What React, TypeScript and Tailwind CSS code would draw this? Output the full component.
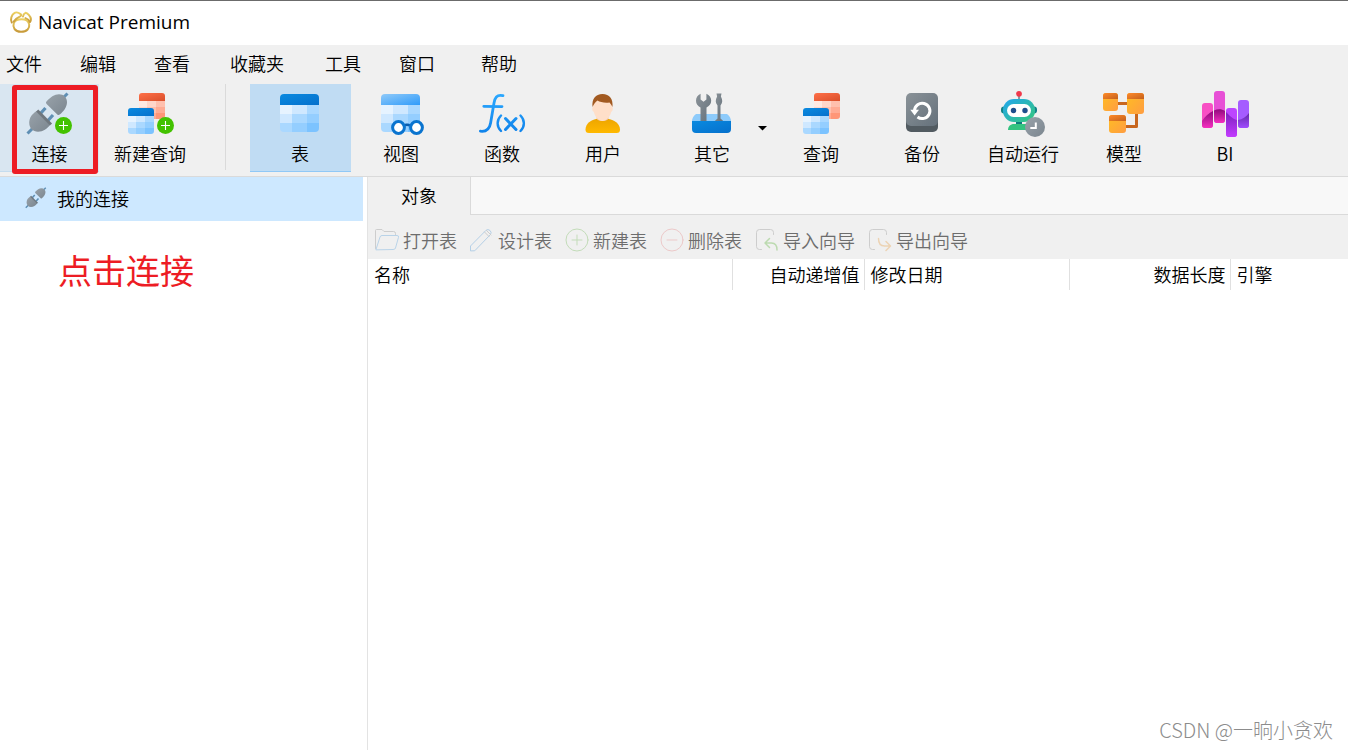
import clsx from 'clsx';
import { ReactNode } from 'react';

interface IToolButton {
  label: string;
  icon: ReactNode;
  selected?: boolean;
}

const MENUS = [
  { label: '文件', width: 'w-[74px]' },
  { label: '编辑', width: 'w-[74px]' },
  { label: '查看', width: 'w-[76px]' },
  { label: '收藏夹', width: 'w-[95px]' },
  { label: '工具', width: 'w-[74px]' },
  { label: '窗口', width: 'w-[82px]' },
  { label: '帮助', width: 'w-[74px]' },
];

const COLUMNS = [
  { label: '名称', className: 'w-[364px] border-r text-left' },
  { label: '自动递增值', className: 'w-[132px] border-r text-right' },
  { label: '修改日期', className: 'w-[205px] border-r text-left' },
  { label: '数据长度', className: 'w-[161px] border-r text-right' },
  { label: '引擎', className: 'text-left' },
];

const BLUES = ['#e6f3ff', '#cfe8ff', '#aad8ff', '#94ceff', '#7cc3ff'];
const ORANGES = ['#ffe9e2', '#ffd6ca', '#ffc0ae', '#ffab94', '#ff9678'];

const Gradients = () => (
  <svg className="absolute h-0 w-0" aria-hidden="true">
    <defs>
      <linearGradient id="gold" x1="0" y1="0" x2="0" y2="1">
        <stop offset="0" stopColor="#ecd062" />
        <stop offset="1" stopColor="#c79a3a" />
      </linearGradient>
      <linearGradient id="blue" x1="0" y1="0" x2="1" y2="1">
        <stop offset="0" stopColor="#0a8ae0" />
        <stop offset="1" stopColor="#0570cc" />
      </linearGradient>
      <linearGradient id="sky" x1="0" y1="0" x2="1" y2="1">
        <stop offset="0" stopColor="#90caf9" />
        <stop offset="1" stopColor="#2f9bfa" />
      </linearGradient>
      <linearGradient id="orange" x1="0" y1="0" x2="1" y2="1">
        <stop offset="0" stopColor="#ff7048" />
        <stop offset="1" stopColor="#d94f2b" />
      </linearGradient>
      <linearGradient id="steel" x1="0" y1="0" x2="1" y2="1">
        <stop offset="0" stopColor="#99a2aa" />
        <stop offset="1" stopColor="#7b868f" />
      </linearGradient>
      <linearGradient id="slate" x1="0" y1="0" x2="1" y2="1">
        <stop offset="0" stopColor="#8a9298" />
        <stop offset="1" stopColor="#65717b" />
      </linearGradient>
      <linearGradient id="fx" gradientUnits="userSpaceOnUse" x1="0" y1="4" x2="0" y2="44">
        <stop offset="0" stopColor="#2ba8ff" />
        <stop offset="1" stopColor="#0f82ea" />
      </linearGradient>
      <linearGradient id="shirt" x1="0" y1="0" x2="0" y2="1">
        <stop offset="0" stopColor="#eda500" />
        <stop offset="1" stopColor="#ffb900" />
      </linearGradient>
      <linearGradient id="robot" x1="0" y1="0" x2="1" y2="1">
        <stop offset="0" stopColor="#22a6f0" />
        <stop offset="1" stopColor="#35c878" />
      </linearGradient>
      <linearGradient id="amber" x1="0" y1="0" x2="1" y2="1">
        <stop offset="0" stopColor="#ffbd22" />
        <stop offset="1" stopColor="#ff9d42" />
      </linearGradient>
      <linearGradient id="rust" x1="0" y1="0" x2="1" y2="1">
        <stop offset="0" stopColor="#ff8a2a" />
        <stop offset="1" stopColor="#c4601c" />
      </linearGradient>
      <linearGradient id="magenta" x1="0" y1="0" x2="0" y2="1">
        <stop offset="0" stopColor="#8f0a7c" />
        <stop offset="1" stopColor="#f52fc0" />
      </linearGradient>
      <linearGradient id="violet" x1="0" y1="0" x2="0" y2="1">
        <stop offset="0" stopColor="#7c22bd" />
        <stop offset="1" stopColor="#c33bff" />
      </linearGradient>
      <linearGradient id="indigo" x1="0" y1="0" x2="0" y2="1">
        <stop offset="0" stopColor="#6428a8" />
        <stop offset="1" stopColor="#a04dff" />
      </linearGradient>
    </defs>
  </svg>
);

const Icon = ({
  children,
  className = 'h-12 w-12',
}: {
  children: ReactNode;
  className?: string;
}) => (
  <svg viewBox="0 0 48 48" fill="none" className={className} aria-hidden="true">
    {children}
  </svg>
);

const LogoIcon = () => (
  <svg
    viewBox="0 0 24 24"
    fill="none"
    stroke="url(#gold)"
    strokeWidth="2"
    strokeLinecap="round"
    strokeLinejoin="round"
    className="h-6 w-6"
    aria-hidden="true"
  >
    <path d="M4.800 13C3.500 17 5.500 21.600 12 21.800c6.200 0 8.800-3.800 8.200-7.400C19.600 11 16 9.300 12.500 9.300c-4 0-6.700 1.400-7.700 3.700Z" />
    <path d="M2.800 12.500C1 9.500 2.500 4.500 5.600 2.800c1.600-.8 4.600 0 6.200 1.400.8.800.3 1.700-.7 2.200C8.500 7.600 6.200 9 4.800 11.500" />
    <path d="M14 6.500c.2-1.700 1-3 2.500-3.700 2 .3 5 3.300 5.400 6.200.1 1.400-.4 2.300-1 3-.8-1.800-2.500-3.200-4.400-3.900" />
  </svg>
);

const AddBadge = ({ x }: { x: number }) => (
  <g>
    <circle cx={x} cy="35.5" r="8.5" fill="#43c200" />
    <path d={`M${x - 4.5} 35.5h9M${x} 31v9`} stroke="#fff" strokeWidth="1.1" />
  </g>
);

const Plug = () => (
  <g>
    <path d="M37.5 7.5 41.5 3.5M1.5 43.5l5-5" stroke="#5f8fb4" strokeWidth="3" />
    <path d="m14.500 23.500 5-5.500M22 30.500l5-5.500" stroke="#5f8fb4" strokeWidth="3.2" />
    <path
      d="M20.500 11.600C24 7.500 28.500 4.300 33 4.300c4.800 0 8 3.400 8 7.900 0 5-3.600 9.300-7.300 12.400-.8.700-1.700.6-2.400-.1L20.600 14c-.7-.7-.8-1.600-.1-2.400Z"
      fill="url(#steel)"
    />
    <path
      d="M10.500 21C6 24 3.200 27.600 3.200 32.800c0 5.200 3.600 9 8.800 9 5.200 0 9-2.900 12.200-7L10.500 21Z"
      fill="url(#steel)"
    />
    <path d="m11.200 20.500 13.800 14" stroke="#6f777e" strokeWidth="3" />
  </g>
);

const Sheet = ({ warm = false }: { warm?: boolean }) => {
  const shades = warm ? ORANGES : BLUES;

  return (
    <g>
      <path d="M0 8V3a3 3 0 0 1 3-3h20a3 3 0 0 1 3 3v5Z" fill={warm ? 'url(#orange)' : 'url(#blue)'} />
      <path d="M0 8h8v6H0Z" fill={shades[0]} />
      <path d="M8 8h9v6H8ZM0 14h8v6H0Z" fill={shades[1]} />
      <path d="M17 8h9v6h-9ZM8 14h9v6H8ZM0 20h8v6H3a3 3 0 0 1-3-3Z" fill={shades[2]} />
      <path d="M17 14h9v6h-9ZM8 20h9v6H8Z" fill={shades[3]} />
      <path d="M17 20h9v3a3 3 0 0 1-3 3h-6Z" fill={shades[4]} />
    </g>
  );
};

const Sheets = () => (
  <g>
    <g transform="translate(13 3)">
      <Sheet warm />
    </g>
    <g transform="translate(2 18)">
      <Sheet />
    </g>
  </g>
);

const Grid = ({ header }: { header: string }) => (
  <g>
    <path d="M4 15V8a4 4 0 0 1 4-4h31a4 4 0 0 1 4 4v7Z" fill={header} />
    <path d="M4 15h12v9H4Z" fill={BLUES[0]} />
    <path d="M16 15h15v9H16ZM4 24h12v9H4Z" fill={BLUES[1]} />
    <path d="M31 15h12v9H31ZM16 24h15v9H16ZM4 33h12v9H8a4 4 0 0 1-4-4Z" fill={BLUES[2]} />
    <path d="M31 24h12v9H31ZM16 33h15v9H16Z" fill={BLUES[3]} />
    <path d="M31 33h12v5a4 4 0 0 1-4 4h-8Z" fill={BLUES[4]} />
  </g>
);

const ConnectionIcon = () => (
  <Icon>
    <Plug />
    <AddBadge x={37.5} />
  </Icon>
);

const NewQueryIcon = () => (
  <Icon>
    <Sheets />
    <AddBadge x={39.5} />
  </Icon>
);

const TableIcon = () => (
  <Icon>
    <Grid header="url(#blue)" />
  </Icon>
);

const ViewIcon = () => (
  <Icon>
    <Grid header="url(#sky)" />
    <path d="M27 35.5c2-1 4-1 6 0" stroke="#0b5cad" strokeWidth="2.5" />
    <circle cx="21.5" cy="37.5" r="5.9" fill="#fff" stroke="#0a74cf" strokeWidth="3" />
    <circle cx="39.5" cy="37.5" r="5.9" fill="#fff" stroke="#0a74cf" strokeWidth="3" />
  </Icon>
);

const FunctionIcon = () => (
  <Icon>
    <g stroke="url(#fx)" strokeLinecap="round" strokeWidth="2.8">
      <path d="M25 5.700C18.500 4.200 16.800 8 16 13l-3.400 20c-1 5.800-3.600 9-10.200 8.200" />
      <path d="M5.800 16.300 24 16.600" />
      <path d="m27.500 28.500 10.500 11M38 28.500l-10.500 11" strokeWidth="3" />
      <path
        d="M23 25.500c-4.500 4.500-4.500 11 0 15.500M42.500 25.500c4.500 4.500 4.500 11 0 15.500"
        strokeWidth="2.4"
      />
    </g>
  </Icon>
);

const UserIcon = () => (
  <Icon>
    <path
      d="M6.500 39.500c0-6 5.500-9.700 12-10.800h10c6.500 1.100 12.500 4.800 12.500 10.800 0 2.400-1 3.500-3.500 3.500H10c-2.500 0-3.500-1.100-3.500-3.500Z"
      fill="url(#shirt)"
    />
    <path d="M17.500 27h12v1.800c-2.300 3-9.700 3-12 0Z" fill="#f3c9ab" />
    <path
      d="M14 12c3-4 16-4 19 0v5c1.500.6.8 4.400-.8 4.800C31.300 26.500 27.500 31 23.500 31s-7.800-4.500-8.700-9.200c-1.600-.4-2.300-4.200-.8-4.800Z"
      fill="#ffdfc9"
    />
    <path
      d="M13.500 17c-.8-8 3-13 10-13s10.800 5 10 13c-.7-1.600-1.700-3-3-4.500-5 .8-9.300-.4-12-2-2.200 1.400-3.600 3.800-5 6.500Z"
      fill="#a25a21"
    />
  </Icon>
);

const OthersIcon = () => (
  <Icon>
    <path d="M8 24h31c2.500 2 4 4.500 4 7H4c0-2.500 1.500-5 4-7Z" fill="#8dcbfb" />
    <path
      d="M12.600 3.700v5.800l2.900 2.300 2.900-2.300V3.700c3 1.200 4.800 4 4.800 7.100 0 3.200-2 5.500-4.700 6.600V32h-6V17.400C9.800 16.300 8 14 8 10.800c0-3.100 1.700-5.900 4.600-7.100Z"
      fill="url(#slate)"
    />
    <path
      d="M28.500 3.500h5l-.6 3c1.800 3.500 1.900 6-.4 9V28.500l2.700 2.500h-8.400l2.700-2.500V15.500c-2.300-3-2.200-5.500-.4-9Z"
      fill="url(#slate)"
    />
    <path d="M4 31h39v8a4 4 0 0 1-4 4H8a4 4 0 0 1-4-4Z" fill="url(#blue)" />
  </Icon>
);

const QueryIcon = () => (
  <Icon>
    <g transform="translate(4 0)">
      <Sheets />
    </g>
  </Icon>
);

const BackupIcon = () => (
  <Icon>
    <rect x="8" y="8" width="32" height="34" rx="5" fill="#525b61" />
    <rect x="8" y="3" width="32" height="33" rx="5" fill="url(#slate)" />
    <path d="M16.500 20.500a7.700 7.700 0 1 1 3 6.500" stroke="#fff" strokeWidth="3" />
    <path d="M12.300 19.800h8.700L16.600 25.500Z" fill="#fff" />
  </Icon>
);

const AutomationIcon = () => (
  <Icon>
    <path d="M20 5v5" stroke="#8d979f" strokeWidth="2" />
    <circle cx="20" cy="3.8" r="2.9" fill="#f0384a" />
    <rect x="2" y="16.5" width="36" height="7" rx="3" fill="#118388" />
    <path d="M17 31h6v4h-6Z" fill="#0e7c7e" />
    <rect x="4" y="9" width="32" height="23" rx="11" fill="url(#robot)" />
    <rect x="8" y="14" width="24" height="13" rx="6.5" fill="#fff" />
    <circle cx="14.5" cy="20.5" r="2.7" fill="#1d4e8c" />
    <circle cx="26" cy="20.5" r="2.7" fill="#1d4e8c" />
    <path d="M9 40c0-3.800 2.500-6 6-6h11c3.500 0 5 2 5 6Z" fill="#33c380" />
    <circle cx="36" cy="37" r="10" fill="url(#steel)" />
    <path d="M36.800 32.500V38h-5.500" stroke="#fff" strokeWidth="2" />
  </Icon>
);

const ModelBox = ({
  x,
  y,
  width,
  height,
}: {
  x: number;
  y: number;
  width: number;
  height: number;
}) => (
  <g>
    <rect x={x} y={y} width={width} height={height} rx="3" fill="url(#amber)" />
    <path d={`M${x} ${y + 6}v-3a3 3 0 0 1 3-3h${width - 6}a3 3 0 0 1 3 3v3Z`} fill="url(#rust)" />
  </g>
);

const ModelIcon = () => (
  <Icon>
    <path d="M17 13.500h11M36.500 23v13.500H25" stroke="#c8671f" strokeWidth="3" strokeLinejoin="round" />
    <ModelBox x={3} y={3} width={15} height={18} />
    <ModelBox x={27} y={3} width={17} height={21} />
    <ModelBox x={9} y={25} width={17} height={18} />
  </Icon>
);

const BiIcon = () => (
  <Icon>
    <clipPath id="bi-bars">
      <rect x="1" y="13" width="11" height="25" rx="3" />
      <rect x="13" y="1" width="11" height="32" rx="3" />
      <rect x="25" y="18" width="11" height="29" rx="3" />
      <rect x="37" y="10" width="11" height="28" rx="3" />
    </clipPath>
    <g clipPath="url(#bi-bars)">
      <path d="M1 0h11v48H1Z" fill="#f84fc4" />
      <path d="M13 0h11v48H13Z" fill="#e750d6" />
      <path d="M25 0h11v48H25Z" fill="#bd45ff" />
      <path d="M37 0h11v48H37Z" fill="#a55cff" />
      <path d="M1 31c3-4.500 7-8 11-10v17H1Z" fill="url(#magenta)" />
      <path d="M13 20.500c4-2 8-1.500 11 .5v12H13Z" fill="url(#magenta)" />
      <path d="M25 22c3.500 3.500 6 6.800 11 8v17H25Z" fill="url(#violet)" />
      <path d="M37 30c4.500-.5 8-3 11-7v15H37Z" fill="url(#indigo)" />
    </g>
  </Icon>
);

const OBJECT_TOOLS: IToolButton[] = [
  { label: '表', icon: <TableIcon />, selected: true },
  { label: '视图', icon: <ViewIcon /> },
  { label: '函数', icon: <FunctionIcon /> },
  { label: '用户', icon: <UserIcon /> },
];

const MORE_TOOLS: IToolButton[] = [
  { label: '查询', icon: <QueryIcon /> },
  { label: '备份', icon: <BackupIcon /> },
  { label: '自动运行', icon: <AutomationIcon /> },
  { label: '模型', icon: <ModelIcon /> },
  { label: 'BI', icon: <BiIcon /> },
];

const ToolButton = ({
  label,
  icon,
  className,
}: {
  label: string;
  icon: ReactNode;
  className: string;
}) => (
  <button
    type="button"
    className={clsx(
      'flex h-[88px] shrink-0 flex-col items-center gap-[3px] border-b pt-[6px]',
      className,
    )}
  >
    {icon}
    <span className="leading-6 whitespace-nowrap">{label}</span>
  </button>
);

const SmallIcon = ({ children, stroke }: { children: ReactNode; stroke: string }) => (
  <svg
    viewBox="0 0 24 24"
    fill="none"
    stroke={stroke}
    strokeLinecap="round"
    strokeLinejoin="round"
    className="h-6 w-6"
    aria-hidden="true"
  >
    {children}
  </svg>
);

const ACTIONS = [
  {
    label: '打开表',
    icon: (
      <SmallIcon stroke="#b9d3e8">
        <path d="M.5 20.500V2.500q0-1 1-1H7l2 2h9.500q2 0 2 2v1" stroke="#cdcdcd" />
        <path d="M1 21.500 5 9q.5-1.500 2-1.500h15q2 0 1.500 1.800L20.500 20q-.4 1.500-2 1.500Z" />
      </SmallIcon>
    ),
  },
  {
    label: '设计表',
    icon: (
      <SmallIcon stroke="#b4cfe6">
        <path d="M.5 22.500V18L16 2.300q2-1.600 4 .2t.5 4L5 22.500Z" />
        <path d="m14.500 4 4.500 4.500M16.500 2.500 21 7" stroke="#cdcdcd" />
      </SmallIcon>
    ),
  },
  {
    label: '新建表',
    icon: (
      <SmallIcon stroke="#c3dcb9">
        <circle cx="12" cy="12" r="11" />
        <path d="M7 12h10M12 7v10" />
      </SmallIcon>
    ),
  },
  {
    label: '删除表',
    icon: (
      <SmallIcon stroke="#ecc9c9">
        <circle cx="12" cy="12" r="11" />
        <path d="M7 12h10" />
      </SmallIcon>
    ),
  },
  {
    label: '导入向导',
    icon: (
      <SmallIcon stroke="#bcdab0">
        <path d="M6.500 21.500h-2q-3 0-3-3v-14q0-3 3-3h11q3 0 3 3v2" stroke="#cdcdcd" />
        <path d="m14.500 10.500-4.500 4.500 4.500 4.500M10.500 15h6q5.500 0 5.500 7" strokeWidth="1.5" />
      </SmallIcon>
    ),
  },
  {
    label: '导出向导',
    icon: (
      <SmallIcon stroke="#ecd3b4">
        <path d="M6.500 21.500h-2q-3 0-3-3v-14q0-3 3-3h11q3 0 3 3v2" stroke="#cdcdcd" />
        <path d="M10.500 10.500q0 7.500 6 7.500h5M18 13.500l4.500 4.500-4.500 4.500" strokeWidth="1.5" />
      </SmallIcon>
    ),
  },
];

const App = () => {
  return (
    <div className="relative flex min-h-screen flex-col overflow-hidden bg-white font-['Noto_Sans_CJK_SC',sans-serif] text-[18px] font-[350] text-black">
      <Gradients />

      <header className="flex h-[45px] items-center gap-[5px] border-t border-[#6b6b6b] pb-[2px] pl-[9px]">
        <LogoIcon />
        <h1 className="font-['Open_Sans','Noto_Sans',sans-serif] text-[19px] font-normal">
          Navicat Premium
        </h1>
      </header>

      <nav className="flex h-[39px] items-center bg-[#f0f0f0] pb-[2px] pl-[6px]">
        {MENUS.map(menu => (
          <button key={menu.label} type="button" className={clsx('text-left', menu.width)}>
            {menu.label}
          </button>
        ))}
      </nav>

      <div className="flex items-start border-b border-[#dadada] bg-[#f0f0f0] pb-1">
        <div className="relative">
          <ToolButton
            label="连接"
            icon={<ConnectionIcon />}
            className="w-[99px] border-[#c5dcee] bg-[#d9e6f1]"
          />
          <div className="pointer-events-none absolute top-px right-px -bottom-[2px] left-[12px] rounded-[3px] border-[5px] border-[#ed1c24]" />
        </div>
        <ToolButton
          label="新建查询"
          icon={<NewQueryIcon />}
          className="w-[102px] border-transparent"
        />
        <div className="mr-6 ml-6 h-[86px] w-px shrink-0 bg-[#dadada]" />
        {OBJECT_TOOLS.map(tool => (
          <ToolButton
            key={tool.label}
            label={tool.label}
            icon={tool.icon}
            className={clsx(
              'w-[101px] pr-px',
              tool.selected ? 'border-[#90c8f6] bg-[#c0dcf3]' : 'border-transparent',
            )}
          />
        ))}
        <div className="flex shrink-0 pl-3">
          <ToolButton label="其它" icon={<OthersIcon />} className="w-[92px] border-transparent" />
          <button type="button" aria-label="更多" className="h-[88px] w-[13px]">
            <svg viewBox="0 0 9 5" className="h-[5px] w-[9px]" aria-hidden="true">
              <path d="M0 0h9L4.500 4.500Z" />
            </svg>
          </button>
        </div>
        {MORE_TOOLS.map(tool => (
          <ToolButton
            key={tool.label}
            label={tool.label}
            icon={tool.icon}
            className="w-[101px] border-transparent pr-px"
          />
        ))}
      </div>

      <div className="flex flex-1">
        <aside className="w-[368px] shrink-0 border-r border-[#e3e3e3]">
          <button
            type="button"
            className="mr-1 flex h-11 w-[363px] items-center gap-2 bg-[#cde8ff] pb-[2px] pl-[25px]"
          >
            <Icon className="h-6 w-6">
              <Plug />
            </Icon>
            <span>我的连接</span>
          </button>
          <p className="mt-6 pl-[58px] text-[34px] leading-[50px] font-normal text-[#ed1c24]">
            点击连接
          </p>
        </aside>

        <main className="min-w-0 flex-1">
          <div className="flex h-[38px] bg-[#f0f0f0]">
            <button type="button" className="w-[102px] shrink-0 pb-[2px]">
              对象
            </button>
            <div className="flex-1 border-b border-l border-[#dadada] bg-[#f8f8f8]" />
          </div>

          <div className="flex h-11 items-center gap-[13px] bg-[#f0f0f0] pt-[6px] pl-[7px] text-[#6d6d6d]">
            {ACTIONS.map(action => (
              <button
                key={action.label}
                type="button"
                className="flex shrink-0 items-center gap-1 whitespace-nowrap"
              >
                {action.icon}
                {action.label}
              </button>
            ))}
          </div>

          <table className="w-full table-fixed">
            <thead>
              <tr>
                {COLUMNS.map(column => (
                  <th
                    key={column.label}
                    scope="col"
                    className={clsx(
                      'h-[31px] border-[#e0e0e0] pr-1 pb-[2px] pl-[6px] leading-6 font-[350] whitespace-nowrap',
                      column.className,
                    )}
                  >
                    {column.label}
                  </th>
                ))}
              </tr>
            </thead>
          </table>
        </main>
      </div>

      <div className="absolute right-[15px] bottom-[5px] text-[20px] font-light text-[#8c8c8c]">
        CSDN @一晌小贪欢
      </div>
    </div>
  );
};

export default App;
